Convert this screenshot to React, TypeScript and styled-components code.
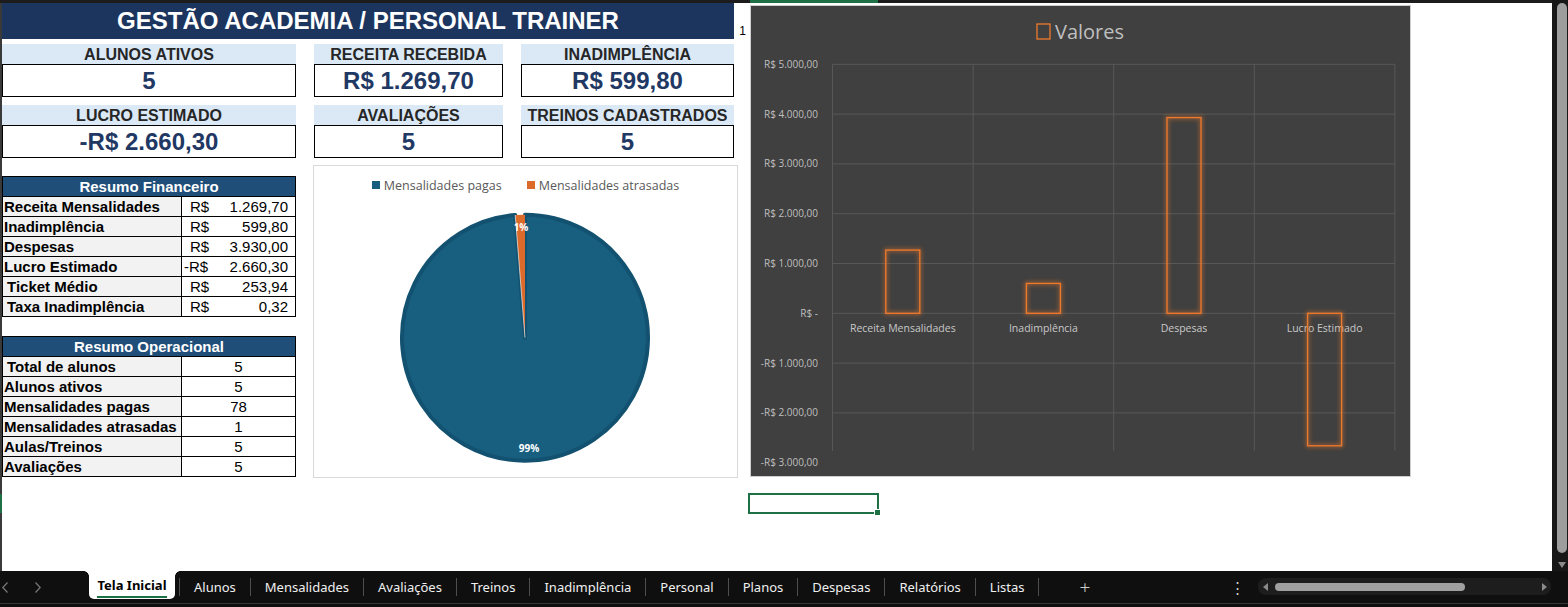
import React from "react";
import styled, { createGlobalStyle } from "styled-components";

const GlobalStyle = createGlobalStyle`
  html, body {
    margin: 0;
    padding: 0;
    background: #fff;
  }
  body {
    width: 1568px;
    height: 607px;
    overflow: hidden;
    font-family: "Liberation Sans", Arial, sans-serif;
  }
`;

const Window = styled.div`
  width: 1568px;
  height: 607px;
  display: flex;
  flex-direction: column;
  background: #0f0f0f;
`;

const Workspace = styled.div`
  display: flex;
  height: 571px;
`;

const Sheet = styled.div`
  width: 1552px;
  height: 571px;
  background: #fff;
  display: flex;
  flex-direction: column;
  overflow: hidden;
`;

const ColumnStrip = styled.div`
  height: 3px;
  flex-shrink: 0;
  background: #1c1c1c;
  display: flex;
`;

const ColumnSelected = styled.div`
  margin-left: 750px;
  width: 128px;
  background: #1e7145;
`;

const SheetBody = styled.div`
  flex: 1;
  display: flex;
`;

const RowGutter = styled.div`
  width: 2px;
  background: #3a3a3a;
  display: flex;
  flex-direction: column;
`;

const RowSelected = styled.div`
  margin-top: 491px;
  height: 19px;
  background: #1e7145;
`;

const Dashboard = styled.div`
  width: 736px;
  display: flex;
  flex-direction: column;
`;

const Title = styled.div`
  width: 732px;
  height: 36px;
  background: #1c355e;
  color: #fff;
  font-weight: 700;
  font-size: 24px;
  display: flex;
  align-items: center;
  justify-content: center;
`;

const KpiGrid = styled.div`
  margin-top: 5px;
  display: grid;
  grid-template-columns: 294px 189px 213px;
  column-gap: 18px;
  row-gap: 8px;
`;

const Kpi = styled.div`
  display: flex;
  flex-direction: column;
`;

const KpiLabel = styled.div`
  height: 20px;
  padding-top: 1px;
  box-sizing: border-box;
  background: #dbe9f6;
  color: #262626;
  font-weight: 700;
  font-size: 16px;
  display: flex;
  align-items: center;
  justify-content: center;
  white-space: nowrap;
`;

const KpiValue = styled.div`
  height: 33px;
  box-sizing: border-box;
  border: 1px solid #000;
  color: #1f3864;
  font-weight: 700;
  font-size: 24px;
  display: flex;
  align-items: center;
  justify-content: center;
`;

const Lower = styled.div`
  margin-top: 7px;
  display: flex;
  gap: 17px;
`;

const Tables = styled.div`
  width: 294px;
  margin-top: 11px;
  display: flex;
  flex-direction: column;
  gap: 19px;
`;

const Table = styled.div`
  border: 1px solid #000;
  font-size: 15px;
  color: #000;
`;

const TableHead = styled.div`
  height: 19px;
  background: #1f4e79;
  color: #fff;
  font-weight: 700;
  display: flex;
  align-items: center;
  justify-content: center;
`;

const TableRow = styled.div`
  height: 19px;
  border-top: 1px solid #000;
  display: grid;
  grid-template-columns: 179px 1fr;
`;

const RowLabel = styled.div<{ $indent?: boolean }>`
  background: #f2f2f2;
  border-right: 1px solid #000;
  font-weight: 700;
  padding-left: ${(p) => (p.$indent ? 4 : 1)}px;
  display: flex;
  align-items: center;
  white-space: nowrap;
`;

const MoneyCell = styled.div`
  display: flex;
  align-items: center;
  justify-content: space-between;
  padding: 0 7px 0 8px;
`;

const Currency = styled.span<{ $negative?: boolean }>`
  margin-left: ${(p) => (p.$negative ? -6 : 0)}px;
`;

const CountCell = styled.div`
  display: flex;
  align-items: center;
  justify-content: center;
`;

const PieCard = styled.div`
  width: 425px;
  height: 313px;
  box-sizing: border-box;
  border: 1px solid #d9d9d9;
  display: flex;
  flex-direction: column;
  font-family: "Open Sans", "Noto Sans", sans-serif;
`;

const Legend = styled.div`
  margin-top: 9px;
  height: 20px;
  display: flex;
  align-items: center;
  justify-content: center;
  gap: 25px;
  font-size: 12.5px;
  color: #595959;
`;

const LegendItem = styled.div`
  display: flex;
  align-items: center;
  gap: 4px;
`;

const Swatch = styled.span<{ $color: string }>`
  width: 8px;
  height: 8px;
  background: ${(p) => p.$color};
`;

const StrayCell = styled.div`
  width: 12px;
  margin-top: 21px;
  height: 14px;
  line-height: 14px;
  font-size: 12px;
  text-align: right;
  padding-right: 4px;
  box-sizing: border-box;
`;

const ChartColumn = styled.div`
  margin-top: 2px;
  display: flex;
  flex-direction: column;
`;

const ChartCard = styled.div`
  width: 661px;
  height: 472px;
  box-sizing: border-box;
  border: 1px solid #cfcfcf;
  background: #404040;
  font-family: "Open Sans", "Noto Sans", sans-serif;
`;

const ActiveCell = styled.div`
  position: relative;
  margin-top: 16px;
  margin-left: -2px;
  width: 131px;
  height: 21px;
  box-sizing: border-box;
  border: 2px solid #1e7145;
`;

const FillHandle = styled.span`
  position: absolute;
  right: -4px;
  bottom: -4px;
  width: 5px;
  height: 5px;
  background: #1e7145;
  border: 1px solid #fff;
`;

const VScroll = styled.div`
  width: 16px;
  height: 571px;
  background: #171717;
  display: flex;
  flex-direction: column;
  align-items: center;
`;

const VThumb = styled.div`
  margin-top: 3px;
  margin-left: 3px;
  width: 10px;
  height: 550px;
  border-radius: 5px;
  background: #9d9d9d;
`;

const DownArrow = styled.div`
  margin-top: 9px;
  margin-left: 3px;
  width: 0;
  height: 0;
  border-left: 4px solid transparent;
  border-right: 4px solid transparent;
  border-top: 6px solid #8a8a8a;
`;

const TabBar = styled.div`
  height: 32px;
  display: flex;
  align-items: flex-start;
  font-family: "Noto Sans", "Open Sans", sans-serif;
  font-size: 13px;
  color: #f0f0f0;
`;

const Footer = styled.div`
  height: 3px;
  border-top: 1px solid #363636;
  background: #0f0f0f;
`;

const Nav = styled.div`
  width: 89px;
  height: 32px;
  display: flex;
  align-items: center;
`;

const NavIcon = styled.svg<{ $left: number }>`
  margin-left: ${(p) => p.$left}px;
  flex-shrink: 0;
`;

const ActiveTab = styled.div`
  position: relative;
  width: 86px;
  height: 28px;
  background: #fff;
  border-radius: 0 0 5px 5px;
  color: #000;
  font-weight: 700;
  display: flex;
  flex-direction: column;
  align-items: center;
  justify-content: center;
  padding-top: 3px;
  box-sizing: border-box;
  margin-right: 4px;

  &::before,
  &::after {
    content: "";
    position: absolute;
    top: 0;
    width: 5px;
    height: 5px;
  }
  &::before {
    left: -5px;
    background: radial-gradient(circle at 0 100%, transparent 4.5px, #fff 5px);
  }
  &::after {
    right: -5px;
    background: radial-gradient(circle at 100% 100%, transparent 4.5px, #fff 5px);
  }
`;

const Underline = styled.span`
  display: block;
  height: 2px;
  margin-top: 2px;
  background: #1e7145;
  width: 70px;
`;

const Tab = styled.div`
  height: 32px;
  padding: 0 14px;
  display: flex;
  align-items: center;
  white-space: nowrap;
`;

const TabSep = styled.span`
  width: 1px;
  height: 18px;
  margin-top: 7px;
  background: #4d4d4d;
`;

const AddTab = styled.div`
  margin-left: 40px;
  height: 32px;
  display: flex;
  align-items: center;
  font-size: 19px;
  font-weight: 300;
  color: #cfcfcf;
`;

const Spacer = styled.div`
  flex: 1;
`;

const MoreDots = styled.div`
  height: 32px;
  margin-right: 13px;
  display: flex;
  align-items: center;
  font-size: 15px;
  color: #cfcfcf;
`;

const HScroll = styled.div`
  margin-top: 7px;
  width: 293px;
  height: 17px;
  border-radius: 8px;
  background: #1d1d1d;
  display: flex;
  align-items: center;
  margin-right: 17px;
`;

const HArrow = styled.span<{ $dir: "left" | "right" }>`
  width: 0;
  height: 0;
  border-top: 4px solid transparent;
  border-bottom: 4px solid transparent;
  ${(p) =>
    p.$dir === "left"
      ? "border-right: 5px solid #8a8a8a; margin-left: 5px;"
      : "border-left: 5px solid #8a8a8a; margin-left: auto; margin-right: 4px;"}
`;

const HThumb = styled.div`
  margin-left: 7px;
  width: 190px;
  height: 8px;
  border-radius: 4px;
  background: #a0a0a0;
`;

const kpis = [
  { label: "ALUNOS ATIVOS", value: "5" },
  { label: "RECEITA RECEBIDA", value: "R$ 1.269,70" },
  { label: "INADIMPLÊNCIA", value: "R$ 599,80" },
  { label: "LUCRO ESTIMADO", value: "-R$ 2.660,30" },
  { label: "AVALIAÇÕES", value: "5" },
  { label: "TREINOS CADASTRADOS", value: "5" },
];

const finRows = [
  { label: "Receita Mensalidades", value: "1.269,70" },
  { label: "Inadimplência", value: "599,80" },
  { label: "Despesas", value: "3.930,00" },
  { label: "Lucro Estimado", value: "2.660,30", negative: true },
  { label: "Ticket Médio", value: "253,94", indent: true },
  { label: "Taxa Inadimplência", value: "0,32", indent: true },
];

const opRows = [
  { label: "Total de alunos", value: "5", indent: true },
  { label: "Alunos ativos", value: "5" },
  { label: "Mensalidades pagas", value: "78" },
  { label: "Mensalidades atrasadas", value: "1" },
  { label: "Aulas/Treinos", value: "5" },
  { label: "Avaliações", value: "5" },
];

const tabs = [
  "Alunos",
  "Mensalidades",
  "Avaliações",
  "Treinos",
  "Inadimplência",
  "Personal",
  "Planos",
  "Despesas",
  "Relatórios",
  "Listas",
];

function PieChart() {
  const cx = 211;
  const cy = 142.7;
  const r = 123;
  const paid = 78;
  const late = 1;
  const a = (paid / (paid + late)) * Math.PI * 2;
  const ex = cx + r * Math.sin(a);
  const ey = cy - r * Math.cos(a);

  return (
    <svg width="423" height="282">
      <path
        d={`M ${cx} ${cy} L ${cx} ${cy - r} A ${r} ${r} 0 1 1 ${ex} ${ey} Z`}
        fill="#175e7f"
        stroke="#12516f"
        strokeWidth="4"
        strokeLinejoin="round"
      />
      <path
        d={`M ${cx} ${cy} L ${ex} ${ey} A ${r} ${r} 0 0 1 ${cx} ${cy - r} Z`}
        fill="#dc6a2a"
      />
      <line x1={cx} y1={cy} x2={ex} y2={ey} stroke="#fff" strokeWidth="0.8" opacity="0.8" />
      <text x="207" y="35.5" fill="#fff" fontSize="10" fontWeight="700" textAnchor="middle">
        1%
      </text>
      <text x="215" y="256.5" fill="#fff" fontSize="10" fontWeight="700" textAnchor="middle">
        99%
      </text>
    </svg>
  );
}

const bars = [
  { name: "Receita Mensalidades", value: 1269.7 },
  { name: "Inadimplência", value: 599.8 },
  { name: "Despesas", value: 3930 },
  { name: "Lucro Estimado", value: -2660.3 },
];

const ticks = [5000, 4000, 3000, 2000, 1000, 0, -1000, -2000, -3000];

function tickLabel(v: number) {
  if (v === 0) return "R$ -";
  return `${v < 0 ? "-" : ""}R$ ${Math.abs(v) / 1000}.000,00`;
}

function BarChart() {
  const x0 = 81.5;
  const cw = 140.6;
  const y0 = 307.3;
  const k = 0.0498;
  const bw = 34;
  const top = y0 - 5000 * k;
  const bottom = 445;
  const y = (v: number) => y0 - v * k;

  return (
    <svg width="659" height="470">
      <defs>
        <filter id="glow" x="-50%" y="-50%" width="200%" height="200%">
          <feGaussianBlur stdDeviation="2" />
        </filter>
      </defs>
      <rect x="286" y="18" width="13" height="15" fill="none" stroke="#f07a2c" strokeWidth="1.3" />
      <text x="304" y="32.5" fill="#bfbfbf" fontSize="20">
        Valores
      </text>

      {ticks
        .filter((t) => t > -3000)
        .map((t) => (
          <line key={t} x1={x0} x2={x0 + cw * 4} y1={y(t)} y2={y(t)} stroke="#585858" strokeWidth="1" />
        ))}
      {[0, 1, 2, 3, 4].map((i) => (
        <line key={i} x1={x0 + cw * i} x2={x0 + cw * i} y1={top} y2={bottom} stroke="#585858" strokeWidth="1" />
      ))}

      {ticks.map((t) => (
        <text key={t} x="67" y={y(t) + 3.5} fill="#bfbfbf" fontSize="10" textAnchor="end">
          {tickLabel(t)}
        </text>
      ))}

      {bars.map((b, i) => (
        <text key={b.name} x={x0 + cw * (i + 0.5)} y="326" fill="#c8c8c8" fontSize="10.5" textAnchor="middle">
          {b.name}
        </text>
      ))}

      {bars.map((b, i) => {
        const bx = x0 + cw * (i + 0.5) - bw / 2;
        const by = Math.min(y(b.value), y0);
        const bh = Math.abs(y(b.value) - y0);
        return (
          <g key={b.name}>
            <rect x={bx} y={by} width={bw} height={bh} fill="none" stroke="#f07a2c" strokeWidth="3" opacity="0.55" filter="url(#glow)" />
            <rect x={bx} y={by} width={bw} height={bh} fill="none" stroke="#f07a2c" strokeWidth="1.3" />
          </g>
        );
      })}
    </svg>
  );
}

export default function App() {
  return (
    <>
      <GlobalStyle />
      <Window>
        <Workspace>
          <Sheet>
            <ColumnStrip>
              <ColumnSelected />
            </ColumnStrip>
            <SheetBody>
              <RowGutter>
                <RowSelected />
              </RowGutter>
              <Dashboard>
                <Title>GESTÃO ACADEMIA / PERSONAL TRAINER</Title>
                <KpiGrid>
                  {kpis.map((k) => (
                    <Kpi key={k.label}>
                      <KpiLabel>{k.label}</KpiLabel>
                      <KpiValue>{k.value}</KpiValue>
                    </Kpi>
                  ))}
                </KpiGrid>
                <Lower>
                  <Tables>
                    <Table>
                      <TableHead>Resumo Financeiro</TableHead>
                      {finRows.map((r) => (
                        <TableRow key={r.label}>
                          <RowLabel $indent={r.indent}>{r.label}</RowLabel>
                          <MoneyCell>
                            <Currency $negative={r.negative}>{r.negative ? "-R$" : "R$"}</Currency>
                            <span>{r.value}</span>
                          </MoneyCell>
                        </TableRow>
                      ))}
                    </Table>
                    <Table>
                      <TableHead>Resumo Operacional</TableHead>
                      {opRows.map((r) => (
                        <TableRow key={r.label}>
                          <RowLabel $indent={r.indent}>{r.label}</RowLabel>
                          <CountCell>{r.value}</CountCell>
                        </TableRow>
                      ))}
                    </Table>
                  </Tables>
                  <PieCard>
                    <Legend>
                      <LegendItem>
                        <Swatch $color="#175e7f" />
                        Mensalidades pagas
                      </LegendItem>
                      <LegendItem>
                        <Swatch $color="#dc6a2a" />
                        Mensalidades atrasadas
                      </LegendItem>
                    </Legend>
                    <PieChart />
                  </PieCard>
                </Lower>
              </Dashboard>
              <StrayCell>1</StrayCell>
              <ChartColumn>
                <ChartCard>
                  <BarChart />
                </ChartCard>
                <ActiveCell>
                  <FillHandle />
                </ActiveCell>
              </ChartColumn>
            </SheetBody>
          </Sheet>
          <VScroll>
            <VThumb />
            <DownArrow />
          </VScroll>
        </Workspace>
        <TabBar>
          <Nav>
            <NavIcon $left={2} width="6" height="11" viewBox="0 0 6 11">
              <polyline points="5.5,0.5 0.8,5.5 5.5,10.5" fill="none" stroke="#7a7a7a" strokeWidth="1.2" />
            </NavIcon>
            <NavIcon $left={27} width="6" height="11" viewBox="0 0 6 11">
              <polyline points="0.5,0.5 5.2,5.5 0.5,10.5" fill="none" stroke="#7a7a7a" strokeWidth="1.2" />
            </NavIcon>
          </Nav>
          <ActiveTab>
            Tela Inicial
            <Underline />
          </ActiveTab>
          {tabs.map((t) => (
            <React.Fragment key={t}>
              <TabSep />
              <Tab>{t}</Tab>
            </React.Fragment>
          ))}
          <TabSep />
          <AddTab>+</AddTab>
          <Spacer />
          <MoreDots>⋮</MoreDots>
          <HScroll>
            <HArrow $dir="left" />
            <HThumb />
            <HArrow $dir="right" />
          </HScroll>
        </TabBar>
        <Footer />
      </Window>
    </>
  );
}
